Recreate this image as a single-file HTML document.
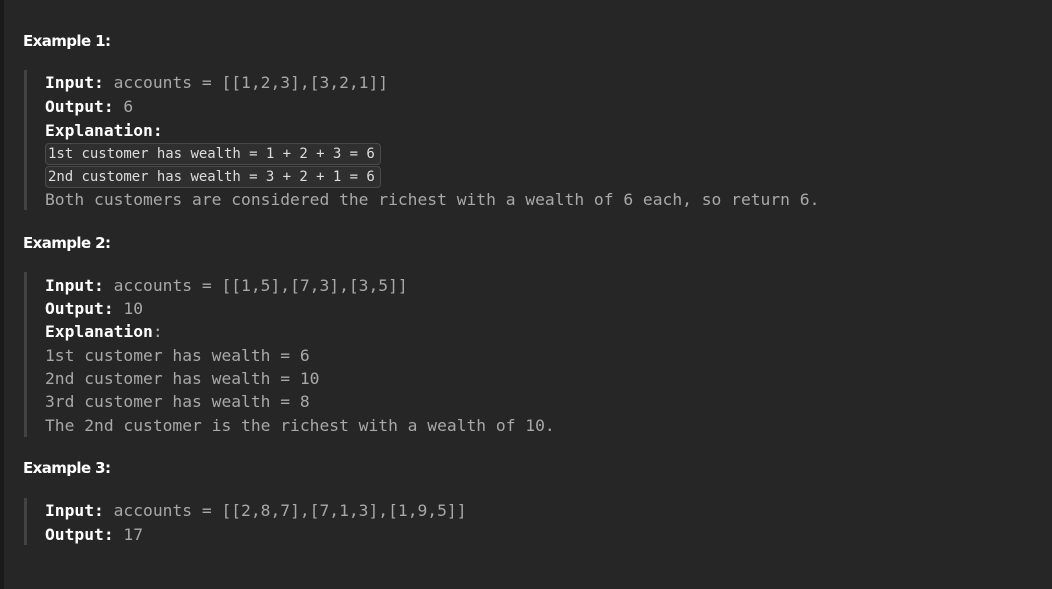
<!DOCTYPE html>
<html><head><meta charset="utf-8"><style>
body{margin:0;width:1052px;height:589px;background:#262626;position:relative;overflow:hidden}
.edge{position:absolute;left:0;top:0;width:4px;height:589px;background:#1a1a1a}
.h{position:absolute;left:23px;font:bold 15px "DejaVu Sans","Liberation Sans",sans-serif;color:#fff;line-height:16px;letter-spacing:-0.6px}
.bar{position:absolute;left:24px;width:3px;background:#434343}
.l{position:absolute;left:45px;font-family:"DejaVu Sans Mono","Liberation Mono",monospace;font-size:16.3px;color:#a8a8a8;line-height:20px;white-space:pre}
.l b{color:#fff}
.bx{position:absolute;left:45px;width:332px;height:20px;border:1px solid #4a4a4a;border-radius:4px;background:#2f2f2f;font-family:"DejaVu Sans Mono",monospace;font-size:14px;color:#ddd;line-height:20px;white-space:pre;padding-left:2px;box-sizing:content-box;letter-spacing:-0.05px}
</style></head><body>
<div class="edge"></div>
<div class="h" style="top:33px">Example 1:</div>
<div class="bar" style="top:70px;height:140px"></div>
<div class="l" style="top:73px"><b>Input:</b> accounts = [[1,2,3],[3,2,1]]</div>
<div class="l" style="top:97px"><b>Output:</b> 6</div>
<div class="l" style="top:121px"><b>Explanation:</b></div>
<div class="bx" style="top:143px">1st customer has wealth = 1 + 2 + 3 = 6</div>
<div class="bx" style="top:166px">2nd customer has wealth = 3 + 2 + 1 = 6</div>
<div class="l" style="top:190px">Both customers are considered the richest with a wealth of 6 each, so return 6.</div>
<div class="h" style="top:235px">Example 2:</div>
<div class="bar" style="top:272px;height:165px"></div>
<div class="l" style="top:276px"><b>Input:</b> accounts = [[1,5],[7,3],[3,5]]</div>
<div class="l" style="top:299px"><b>Output:</b> 10</div>
<div class="l" style="top:322px"><b>Explanation</b>:</div>
<div class="l" style="top:346px">1st customer has wealth = 6</div>
<div class="l" style="top:369px">2nd customer has wealth = 10</div>
<div class="l" style="top:392px">3rd customer has wealth = 8</div>
<div class="l" style="top:416px">The 2nd customer is the richest with a wealth of 10.</div>
<div class="h" style="top:460px">Example 3:</div>
<div class="bar" style="top:498px;height:47px"></div>
<div class="l" style="top:501px"><b>Input:</b> accounts = [[2,8,7],[7,1,3],[1,9,5]]</div>
<div class="l" style="top:525px"><b>Output:</b> 17</div>
</body></html>
